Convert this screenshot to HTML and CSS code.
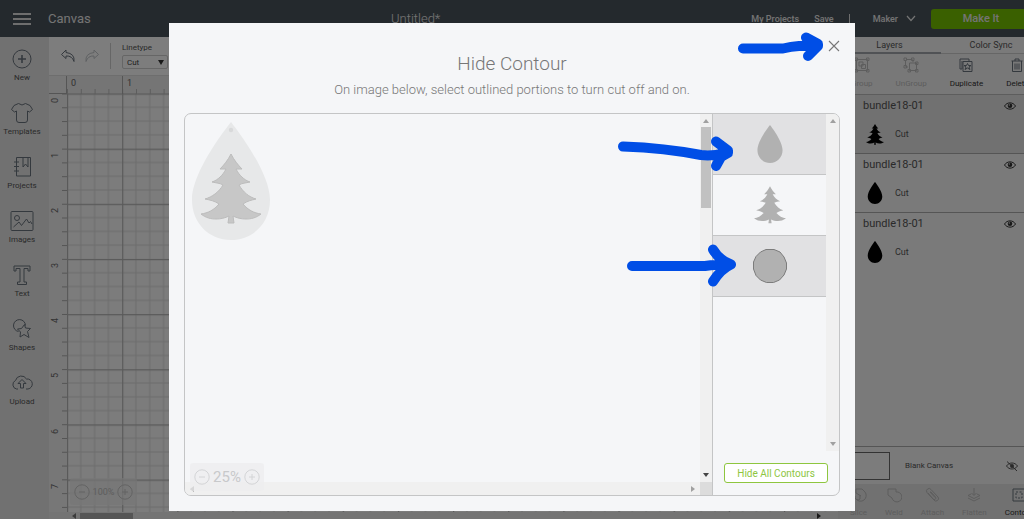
FILE: index.html
```html
<!DOCTYPE html>
<html lang="en">
<head>
    <meta charset="UTF-8">
    <meta name="viewport" content="width=device-width, initial-scale=1.0">
    <title>Canvas - Untitled*</title>
    <link rel="stylesheet" href="styles.css">
</head>
<body>
    <!-- Shared shapes -->
    <svg class="defs" aria-hidden="true">
        <symbol id="tree" viewBox="0 0 60 70">
            <path d="M30 0C27 6 23 11 19 15H25C22 21 17 26 11 28C15 29 19 29 22 31C18 38 11 43 4 45C9 46 14 47 18 50C13 56 7 59 0 60C5 64 10 65 15 65C20 65 24 64 28 62L27 69H33L32 62C36 64 40 65 45 65C50 65 55 64 60 60C53 59 47 56 42 50C46 47 51 46 55 45C48 43 42 38 38 31C41 29 45 29 49 28C43 26 38 21 35 15H41C37 11 33 6 30 0Z"/>
        </symbol>
        <symbol id="drop" viewBox="0 0 78 118">
            <path d="M39 0C42 4 78 49 78 78C78 101 61 118 39 118C17 118 0 101 0 78C0 49 36 4 39 0Z"/>
        </symbol>
        <symbol id="eye" viewBox="0 0 12 8">
            <path d="M.5 4C3-.2 9-.2 11.500 4C9 8.200 3 8.200 .5 4Z" fill="none" stroke="#333" stroke-width="1"/>
            <circle cx="6" cy="3.800" r="2.300" fill="#333"/>
            <circle cx="5.300" cy="3" r=".7" fill="#ddd"/>
        </symbol>
    </svg>

    <div class="app">
        <header class="topbar">
            <button class="menu" aria-label="Menu"><span></span><span></span><span></span></button>
            <span class="page-name">Canvas</span>
            <span class="project-name">Untitled*</span>
            <nav class="top-links">
                <a href="#">My Projects</a>
                <a href="#">Save</a>
                <span class="divider"></span>
                <button class="machine">Maker
                    <svg width="10" height="7" viewBox="0 0 10 7"><path d="M1 1L5 5.500L9 1" fill="none" stroke="currentColor" stroke-width="1.200"/></svg>
                </button>
                <button class="make-it">Make It</button>
            </nav>
        </header>

        <div class="workspace">
            <nav class="sidebar">
                <button>
                    <svg width="22" height="22" viewBox="0 0 22 22"><circle cx="11" cy="11" r="9"/><path d="M11 7V15M7 11H15" stroke-width="1.600"/></svg>
                    New
                </button>
                <button>
                    <svg width="22" height="22" viewBox="0 0 22 22"><path d="M7.500 1.500Q11 4.500 14.500 1.500L19 3.500L21.500 7.500L18.500 10L16.500 9V18Q16.500 20.500 14 20.500H8Q5.500 20.500 5.500 18V9L3.500 10L.5 7.500L3 3.500Z"/></svg>
                    Templates
                </button>
                <button>
                    <svg width="22" height="22" viewBox="0 0 22 22"><path d="M5.500 1.500H19.500V20H5.500ZM12 1.500V11L14.500 8L17 11V1.500M3 6H8M3 10.500H8M3 15H8"/></svg>
                    Projects
                </button>
                <button>
                    <svg width="24" height="22" viewBox="0 0 24 22"><rect x="1" y="1.500" width="22" height="19" rx="1"/><circle cx="7" cy="8" r="2.500"/><path d="M3.500 17L9 12L11.500 15.500L16.500 9L19 13L20.500 11.500L22 14"/></svg>
                    Images
                </button>
                <button>
                    <svg width="22" height="22" viewBox="0 0 22 22"><path d="M3 2H19V7H17V4.500H13V18H15.500V20.500H6.500V18H9V4.500H5V7H3Z"/></svg>
                    Text
                </button>
                <button>
                    <svg width="22" height="22" viewBox="0 0 22 22"><path d="M7.500 13.500A6 6 0 1 1 14.500 7.500"/><path d="M13.500 6.500L14.500 10L19.500 10.500L16.500 13.500L18 19.500L13 16.500L9 19L9.500 14L6.500 11L10.500 10.500Z"/></svg>
                    Shapes
                </button>
                <button>
                    <svg width="22" height="22" viewBox="0 0 22 22"><path d="M7 17H5.500A4.500 4.500 0 0 1 4.500 8.500A6 6 0 0 1 15.500 7A5 5 0 0 1 17 17H15"/><path d="M9.500 16V11.500H7L11 7.500L15 11.500H12.500V16Z"/></svg>
                    Upload
                </button>
            </nav>

            <main class="editor">
                <div class="toolbar">
                    <button aria-label="Undo"><svg width="16" height="14" viewBox="0 0 16 14"><path d="M6 1L1.500 5.500L6 9.500V7Q12 6.500 14 12.500Q15 4.500 6 3.500Z"/></svg></button>
                    <button class="off" aria-label="Redo"><svg width="16" height="14" viewBox="0 0 16 14"><path d="M10 1L14.500 5.500L10 9.500V7Q4 6.500 2 12.500Q1 4.500 10 3.500Z"/></svg></button>
                    <div class="linetype">
                        <label for="linetype">Linetype</label>
                        <div class="select-wrap">
                            <select id="linetype"><option>Cut</option><option>Draw</option></select>
                            <svg width="6" height="5" viewBox="0 0 6 5"><path d="M0 0H6L3 5Z"/></svg>
                        </div>
                    </div>
                </div>
                <div class="mat">
                    <svg class="grid" aria-label="Cutting mat">
                        <defs>
                            <pattern id="cells" x="18" y="17.500" width="55.150" height="55.150" patternUnits="userSpaceOnUse">
                                <path d="M13.800 0V55.150M27.600 0V55.150M41.400 0V55.150M0 13.800H55.150M0 27.600H55.150M0 41.400H55.150" stroke="#dadada" stroke-width="1"/>
                                <path d="M.6 0V55.150M0 .6H55.150" stroke="#b4b4b4" stroke-width="1.200"/>
                            </pattern>
                            <pattern id="ticksX" x="18" width="13.800" height="18" patternUnits="userSpaceOnUse"><path d="M.5 13V18" stroke="#bbb"/></pattern>
                            <pattern id="ticksY" y="17.500" width="18" height="13.780" patternUnits="userSpaceOnUse"><path d="M13 .5H18" stroke="#aaa"/></pattern>
                        </defs>
                        <rect width="100%" height="18" fill="#eaeaea"/>
                        <rect width="18" height="100%" fill="#eeeeee"/>
                        <rect x="18" y="17" width="100%" height="100%" fill="url(#cells)"/>
                        <rect x="18" width="100%" height="18" fill="url(#ticksX)"/>
                        <rect y="17" width="18" height="100%" fill="url(#ticksY)"/>
                        <path d="M17.500 0V17M73.500 0V18M0 17.500H18" stroke="#aaa"/>
                        <g class="marks">
                            <text x="22" y="10">0</text><text x="78" y="10">1</text>
                            <text transform="translate(9 27) rotate(-90)">0</text>
                            <text transform="translate(9 82) rotate(-90)">1</text>
                            <text transform="translate(9 137) rotate(-90)">2</text>
                            <text transform="translate(9 192) rotate(-90)">3</text>
                            <text transform="translate(9 247) rotate(-90)">4</text>
                            <text transform="translate(9 302) rotate(-90)">5</text>
                            <text transform="translate(9 358) rotate(-90)">6</text>
                            <text transform="translate(9 413) rotate(-90)">7</text>
                        </g>
                    </svg>
                    <div class="zoom mat-zoom">
                        <button aria-label="Zoom out"><svg width="16" height="16" viewBox="0 0 16 16"><circle cx="8" cy="8" r="7.200"/><path d="M5 8H11"/></svg></button>
                        <span>100%</span>
                        <button aria-label="Zoom in"><svg width="16" height="16" viewBox="0 0 16 16"><circle cx="8" cy="8" r="7.200"/><path d="M5 8H11M8 5V11"/></svg></button>
                    </div>
                </div>
                <div class="mat-scroll">
                    <svg width="4" height="6" viewBox="0 0 4 6" fill="#777"><path d="M4 0V6L0 3Z"/></svg>
                    <div class="mat-thumb"></div>
                    <svg class="mat-right" width="4" height="6" viewBox="0 0 4 6" fill="#333"><path d="M0 0V6L4 3Z"/></svg>
                </div>
            </main>

            <aside class="panel">
                <div class="tabs">
                    <button class="active">Layers</button>
                    <button>Color Sync</button>
                </div>
                <div class="tools top-tools">
                    <button disabled><svg width="16" height="16" viewBox="0 0 16 16"><path d="M2.500 2.500H13.500V13.500H2.500ZM5 5H9V9H5ZM7.500 7.500H11.500V11.500H7.500Z"/><path d="M1 1H3.500V3.500H1ZM12.500 1H15V3.500H12.500ZM1 12.500H3.500V15H1ZM12.500 12.500H15V15H12.500Z"/></svg>Group</button>
                    <button disabled><svg width="16" height="16" viewBox="0 0 16 16"><path d="M3 2.500H9.500M2.500 3V9.500M3 10H5M10 3V5M6.500 6H13.500V13.500H6.500Z"/><path d="M1 1H3.500V3.500H1ZM8.500 1H11V3.500H8.500ZM1 8.500H3.500V11H1ZM5 12.500H7.500V15H5ZM12.500 12.500H15V15H12.500ZM12.500 5H15V7.500H12.500Z"/></svg>UnGroup</button>
                    <button><svg width="16" height="16" viewBox="0 0 16 16"><path d="M4 12H2V2H11V4M5 4.500H14V14.500H5ZM4 4V12M9.500 6.500L10.500 8.500H13L11 10L12 12.500L9.500 11L7 12.500L8 10L6 8.500H8.500Z"/></svg>Duplicate</button>
                    <button><svg width="16" height="16" viewBox="0 0 16 16"><path d="M2.500 4H13.500M6 4V2H10V4M3.500 4V14.500H12.500V4M6 6.500V12.500M8 6.500V12.500M10 6.500V12.500"/></svg>Delete</button>
                </div>
                <ul class="layers">
                    <li class="selected">
                        <div class="layer-name">bundle18-01 <button aria-label="Hide layer"><svg width="12" height="8"><use href="#eye"/></svg></button></div>
                        <div class="layer-cut"><svg width="18" height="21"><use href="#tree"/></svg> Cut</div>
                    </li>
                    <li>
                        <div class="layer-name">bundle18-01 <button aria-label="Hide layer"><svg width="12" height="8"><use href="#eye"/></svg></button></div>
                        <div class="layer-cut"><svg width="18" height="22"><use href="#drop"/></svg> Cut</div>
                    </li>
                    <li>
                        <div class="layer-name">bundle18-01 <button aria-label="Hide layer"><svg width="12" height="8"><use href="#eye"/></svg></button></div>
                        <div class="layer-cut"><svg width="18" height="22"><use href="#drop"/></svg> Cut</div>
                    </li>
                </ul>
                <div class="blank">
                    <div class="swatch"></div>
                    <span>Blank Canvas</span>
                    <button aria-label="Show canvas"><svg width="12" height="12" viewBox="0 0 12 12"><path d="M.5 6C3 2 9 2 11.500 6C9 10 3 10 .5 6ZM1 1.500L11 11" fill="none" stroke="#555" stroke-width="1"/><circle cx="6" cy="6" r="2" fill="#555"/></svg></button>
                </div>
                <div class="tools bottom-tools">
                    <button disabled><svg width="16" height="16" viewBox="0 0 16 16"><path d="M5 6V2H11L14 5A5 5 0 1 1 5 12M5 6L10 9M4 9A3 3 0 0 0 9 12V8"/></svg>Slice</button>
                    <button disabled><svg width="16" height="16" viewBox="0 0 16 16"><path d="M2 2H10V5A5 5 0 1 1 6 11L2 8Z"/></svg>Weld</button>
                    <button disabled><svg width="16" height="16" viewBox="0 0 16 16"><path d="M4 6L10 13A2.500 2.500 0 0 0 14 10L7 2.500A2.300 2.300 0 0 0 3 5.500L9 12A1.500 1.500 0 0 0 11.500 10L6.500 4.500M6 5L11 10.500"/></svg>Attach</button>
                    <button disabled><svg width="16" height="16" viewBox="0 0 16 16"><path d="M8 1V8M5.500 6L8 8.500L10.500 6M5 7L2 8.500L8 11.500L14 8.500L11 7M2 11L8 14L14 11"/></svg>Flatten</button>
                    <button><svg width="16" height="16" viewBox="0 0 16 16"><path d="M2 2H14V14H2Z"/><path d="M5 5H11V11H5Z" stroke-dasharray="2 1.500"/></svg>Contour</button>
                </div>
            </aside>
        </div>
    </div>

    <div class="backdrop">
        <div class="modal" role="dialog" aria-labelledby="modalTitle">
            <button class="close" aria-label="Close"><svg width="12" height="12" viewBox="0 0 12 12"><path d="M1 1L11 11M11 1L1 11" stroke="#777" stroke-width="1.100"/></svg></button>
            <h2 id="modalTitle">Hide Contour</h2>
            <p>On image below, select outlined portions to turn cut off and on.</p>

            <div class="contour">
                <div class="preview">
                    <div class="picture">
                        <svg width="78" height="118" viewBox="0 0 78 118">
                            <use href="#drop" width="78" height="118" fill="#e7e8e9"/>
                            <circle cx="39" cy="8" r="2.200" fill="#d8d9da"/>
                            <use href="#tree" x="9" y="32" width="60" height="70" fill="#c7c7c7" stroke="#bcbcbc"/>
                        </svg>
                    </div>
                    <div class="scroll-y">
                        <svg width="6" height="4" viewBox="0 0 6 4"><path d="M0 4H6L3 0Z" fill="#a0a0a0"/></svg>
                        <div class="thumb"></div>
                        <svg class="end" width="6" height="4" viewBox="0 0 6 4"><path d="M0 0H6L3 4Z" fill="#444"/></svg>
                    </div>
                    <div class="scroll-x">
                        <svg width="4" height="6" viewBox="0 0 4 6"><path d="M4 0V6L0 3Z" fill="#a0a0a0"/></svg>
                        <svg width="4" height="6" viewBox="0 0 4 6"><path d="M0 0V6L4 3Z" fill="#a0a0a0"/></svg>
                    </div>
                    <div class="corner"></div>
                    <div class="zoom modal-zoom">
                        <button aria-label="Zoom out"><svg width="16" height="16" viewBox="0 0 16 16"><circle cx="8" cy="8" r="7.200"/><path d="M5 8H11"/></svg></button>
                        <span>25%</span>
                        <button aria-label="Zoom in"><svg width="16" height="16" viewBox="0 0 16 16"><circle cx="8" cy="8" r="7.200"/><path d="M5 8H11M8 5V11"/></svg></button>
                    </div>
                </div>
                <div class="pieces">
                    <div class="piece-area">
                        <div class="piece-list">
                            <button class="hidden-piece" aria-label="Drop"><svg width="26" height="38" fill="#b1b1b1"><use href="#drop"/></svg></button>
                            <button aria-label="Tree"><svg width="32" height="38" fill="#b1b1b1"><use href="#tree"/></svg></button>
                            <button class="hidden-piece" aria-label="Circle"><svg width="36" height="36" viewBox="0 0 36 36"><path d="M14 1.500H22L28 4L32 9L34.500 15V21L32 27L27.500 32L21.500 34.500H14.500L8.500 32L4 27.500L1.500 21V14L4 8.500L8.500 4Z" fill="#b1b1b1" stroke="#7c7c7c" stroke-linejoin="round"/></svg></button>
                        </div>
                        <div class="scroll-y">
                            <svg width="6" height="4" viewBox="0 0 6 4"><path d="M0 4H6L3 0Z" fill="#a0a0a0"/></svg>
                            <svg class="end" width="6" height="4" viewBox="0 0 6 4"><path d="M0 0H6L3 4Z" fill="#a0a0a0"/></svg>
                        </div>
                    </div>
                    <button class="hide-all">Hide All Contours</button>
                </div>
            </div>

            <!-- Hand drawn arrows -->
            <svg class="arrows" width="687" height="488" viewBox="168 23 687 488">
                <path d="M742 48.500H782Q790 46.500 798 46L815 45.500M805 37.500L817 44V46L807 56"/>
                <path d="M622 146.500Q664 148 700 155Q712 156.500 726 152.500M715 141.500L727 150.500V153L720 157L715 166"/>
                <path d="M631 266H704Q715 264.500 730 264.500M712 249.500Q718 260 730 264.500Q720 269 712 281.500"/>
            </svg>
        </div>
    </div>
</body>
</html>
```
FILE: styles.css
```css
* {
    box-sizing: border-box;
}

body {
    margin: 0;
    font-family: Roboto, "Liberation Sans", sans-serif;
    font-size: 9px;
    color: #555;
    overflow: hidden;
}

button {
    font: inherit;
    color: inherit;
    background: none;
    border: none;
    padding: 0;
    cursor: pointer;
}

svg {
    display: block;
    flex-shrink: 0;
}

.defs {
    position: absolute;
    width: 0;
    height: 0;
}

.app {
    height: 100vh;
    display: flex;
    flex-direction: column;
    background: #f8f8f8;
}

/* Header */
.topbar {
    height: 37px;
    flex-shrink: 0;
    display: grid;
    grid-template-columns: 48px 343px 1fr auto;
    align-items: center;
    background: #48525a;
    color: #e8e8e8;
}

.menu {
    display: flex;
    flex-direction: column;
    gap: 3px;
    width: 18px;
    margin-left: 13px;
}

.menu span {
    height: 2px;
    background: #ddd;
}

.page-name {
    font-size: 13px;
}

.project-name {
    font-size: 13px;
    font-weight: 300;
}

.top-links {
    display: flex;
    align-items: center;
    justify-content: flex-end;
    gap: 15px;
    font-size: 9px;
    font-weight: 500;
}

.top-links a {
    color: inherit;
    text-decoration: none;
}

.divider {
    width: 1px;
    height: 9px;
    background: #ddd;
}

.machine {
    display: flex;
    align-items: center;
    gap: 8px;
    margin-left: 8px;
}

.make-it {
    width: 107px;
    height: 20px;
    padding-right: 7px;
    margin-right: -14px;
    border-radius: 3px;
    background: #74c000;
    font-size: 11px;
}

.workspace {
    flex: 1;
    min-height: 0;
    display: flex;
}

/* Left menu */
.sidebar {
    width: 49px;
    display: flex;
    flex-direction: column;
    gap: 18px;
    padding: 11px 7px 0 2px;
    background: #e2e2e2;
    font-size: 8px;
}

.sidebar button {
    display: flex;
    flex-direction: column;
    align-items: center;
    gap: 2px;
    height: 36px;
    line-height: 12px;
}

.sidebar svg,
.toolbar button svg,
.tools svg {
    fill: none;
    stroke: #69727c;
    stroke-width: 1;
}

/* Editor */
.editor {
    flex: 1;
    min-width: 0;
    display: flex;
    flex-direction: column;
}

.toolbar {
    height: 39px;
    display: flex;
    align-items: center;
    gap: 8px;
    padding-left: 11px;
    background: #fafafa;
    border-bottom: 1px solid #ddd;
}

.toolbar .off {
    opacity: 0.4;
}

.linetype {
    margin-left: 2px;
    padding-left: 11px;
    border-left: 1px solid #ccc;
    font-size: 8px;
}

.linetype label {
    display: block;
    margin-bottom: 2px;
    line-height: 10px;
}

.select-wrap {
    display: grid;
    align-items: center;
}

.select-wrap select,
.select-wrap svg {
    grid-area: 1 / 1;
}

.select-wrap svg {
    justify-self: end;
    margin-right: 4px;
    fill: #333;
    pointer-events: none;
}

.select-wrap select {
    appearance: none;
    width: 46px;
    height: 14px;
    padding: 0 4px;
    border: 1px solid #ccc;
    border-radius: 2px;
    background: #fafafa;
    color: #444;
    font: inherit;
}

.mat {
    flex: 1;
    min-height: 0;
    position: relative;
}

.grid {
    width: 100%;
    height: 100%;
}

.marks {
    font-size: 9px;
    fill: #666;
}

.zoom {
    position: absolute;
    display: flex;
    align-items: center;
    justify-content: center;
    gap: 3px;
    border-radius: 3px;
    fill: none;
}

.mat-zoom {
    left: 21px;
    bottom: 7px;
    width: 67px;
    height: 27px;
    background: rgba(236, 236, 236, 0.7);
    color: #bcbcbc;
    stroke: #c6c6c6;
}

.mat-zoom span,
.modal-zoom span {
    stroke: none;
}

.mat-scroll {
    height: 7px;
    display: flex;
    align-items: center;
    gap: 4px;
    padding: 0 17px 0 23px;
    background: #e8e8e8;
}

.mat-thumb {
    width: 53px;
    height: 6px;
    background: #aaa;
}

.mat-right {
    margin-left: auto;
}

/* Layers panel */
.panel {
    width: 186px;
    display: flex;
    flex-direction: column;
    overflow: hidden;
    background: #f4f4f4;
}

.tabs {
    display: grid;
    grid-template-columns: 103px 100px;
    font-size: 9px;
}

.tabs button {
    height: 17px;
    border-bottom: 1px solid #ccc;
}

.tabs .active {
    border-bottom: 2px solid #a0a5aa;
}

.tools {
    display: flex;
    font-size: 8px;
    background: #e2e2e2;
}

.tools button {
    display: flex;
    flex-direction: column;
    align-items: center;
    line-height: 10px;
    flex-shrink: 0;
    color: #333;
}

.tools button:disabled {
    color: #bbb;
}

.tools button:disabled svg {
    stroke: #bbb;
}

.top-tools {
    height: 41px;
    gap: 23px;
    padding: 3px 0 0 13px;
    background: #f0f0f0;
    border-bottom: 1px solid #bbb;
}

.top-tools button {
    gap: 6px;
    height: 32px;
}

.layers {
    flex: 1;
    list-style: none;
    margin: 0;
    padding: 0;
}

.layers li {
    height: 59px;
    padding: 4px 8px 0 25px;
    border-bottom: 1px solid #aaa;
}

.layers li:last-child {
    border: none;
}

.layers .selected {
    background: #e2e2e2;
}

.layer-name {
    display: flex;
    align-items: center;
    justify-content: space-between;
    font-size: 11px;
    line-height: 14px;
}

.layer-cut {
    display: flex;
    align-items: center;
    gap: 11px;
    height: 38px;
    margin-top: 2px;
    padding-left: 3px;
    font-size: 9px;
}

.layer-cut svg {
    fill: #000;
}

.blank {
    display: flex;
    align-items: center;
    height: 38px;
    padding-right: 6px;
    border-top: 1px solid #aaa;
    font-size: 8px;
}

.swatch {
    width: 52px;
    height: 28px;
    margin-right: 15px;
    background: #f8f8f8;
    border: 1px solid #666;
}

.blank button {
    margin-left: auto;
}

.bottom-tools {
    height: 35px;
    gap: 18px;
    padding: 3px 0 0 12px;
}

.bottom-tools button {
    gap: 5px;
    height: 31px;
}

/* Modal */
.backdrop {
    position: fixed;
    inset: 0;
    padding-top: 23px;
    background: rgba(0, 0, 0, 0.5);
}

.modal {
    position: relative;
    width: 67%;
    min-width: 600px;
    margin: 0 auto;
    padding: 29px 15px 15px;
    background: #f5f6f8;
    text-align: center;
    color: #777;
}

.close {
    position: absolute;
    top: 17px;
    right: 15px;
}

.modal h2 {
    margin: 0 0 6px;
    font-size: 19px;
    font-weight: 300;
    line-height: 24px;
}

.modal p {
    margin: 0 0 16px;
    font-size: 13px;
    font-weight: 300;
    line-height: 15px;
}

.contour {
    display: grid;
    grid-template-columns: 1fr 126px;
    height: 383px;
    border: 1px solid #c4c5c6;
    border-radius: 7px;
    overflow: hidden;
}

.preview {
    position: relative;
    display: grid;
    grid-template-columns: 1fr 12px;
    grid-template-rows: 1fr 13px;
    border-right: 1px solid #c4c5c6;
}

.picture {
    padding: 8px 7px;
}

.scroll-y,
.scroll-x {
    display: flex;
    align-items: center;
    background: #f0f0f0;
}

.scroll-y {
    flex-direction: column;
    padding: 5px 1px;
}

.scroll-x {
    justify-content: space-between;
    padding: 0 5px;
}

.scroll-y .end {
    margin-top: auto;
}

.thumb {
    width: 100%;
    height: 81px;
    margin-top: 4px;
    background: #c1c1c1;
}

.corner {
    background: #dcdcdc;
}

.modal-zoom {
    left: 5px;
    bottom: 4px;
    width: 74px;
    height: 28px;
    background: rgba(236, 236, 238, 0.7);
    color: #c8c9cb;
    stroke: #d3d4d6;
    font-size: 15px;
}

.pieces {
    display: flex;
    flex-direction: column;
}

.piece-area {
    flex: 1;
    display: grid;
    grid-template-columns: 1fr 13px;
}

.piece-list button {
    display: flex;
    align-items: center;
    justify-content: center;
    width: 100%;
    height: 61px;
    border-bottom: 1px solid #c4c5c6;
}

.piece-list .hidden-piece {
    background: #e1e1e3;
}

.hide-all {
    width: 104px;
    height: 20px;
    margin: 12px 0 12px 11px;
    border: 1px solid #8ec63f;
    border-radius: 3px;
    background: #fff;
    color: #8ec63f;
    font-size: 10px;
}

.arrows {
    position: absolute;
    top: 0;
    left: 0;
    fill: none;
    stroke: #004ee6;
    stroke-width: 10;
    stroke-linecap: round;
    stroke-linejoin: round;
    pointer-events: none;
}
```
